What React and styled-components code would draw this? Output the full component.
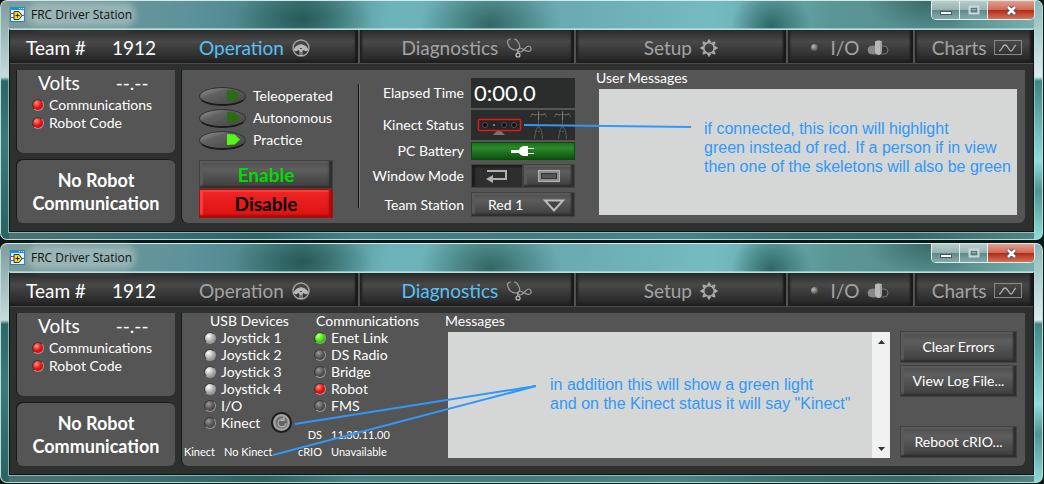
import React, { useState } from "react";
import styled, { createGlobalStyle, css } from "styled-components";

const GlobalStyle = createGlobalStyle`
  * {
    box-sizing: border-box;
  }
  body {
    margin: 0;
    background: #0c1716;
    color: #fff;
    font-family: Lato, "Open Sans", sans-serif;
    font-size: 14px;
    line-height: 18px;
  }
  button, input, select, textarea {
    font: inherit;
    color: inherit;
    margin: 0;
  }
`;

// Icons
const LabviewIcon = () => (
  <svg width="15" height="15" viewBox="0 0 15 15" aria-hidden="true">
    <rect width="15" height="15" fill="#e8f4fb" />
    <rect x="0.5" y="0.5" width="14" height="14" fill="none" stroke="#1d7fd0" />
    <rect width="15" height="3" fill="#1d8de0" />
    <path d="M9 1.5h1M11 1.5h1M13 1.5h1" stroke="#fff" />
    <path d="M1 6.500h3M1 10.500h3" stroke="#d33" />
    <path d="M11 8.500h3" stroke="#26c" />
    <path d="M4 4.500h5l3 4-3 4H4z" fill="#f5dc1c" stroke="#333" />
    <path d="M5.500 8.500h4M7.500 6.500v4" stroke="#222" />
  </svg>
);

const WheelIcon = () => (
  <svg width="18" height="18" viewBox="0 0 18 18" aria-hidden="true">
    <circle cx="9" cy="9" r="8" fill="none" stroke="#a2a2a2" strokeWidth="1.400" />
    <path
      d="M1.500 11c1-3 3-4.500 5-5 1-1 4-1 5 0 2 .5 4 2 5 5l-2.500 1.500-2.500-1.500-1 1v5H7.500v-5l-1-1L4 12.500z"
      fill="#b8b8b8"
    />
    <path d="M8 9.500h2M9 13v3" stroke="#484848" strokeWidth="1.200" />
  </svg>
);

const StethoscopeIcon = () => (
  <svg width="26" height="20" viewBox="0 0 26 20" aria-hidden="true">
    <g fill="none" stroke="#9c9c9c" strokeWidth="1.200">
      <path d="M5 1C2 1 1 3 2 6c1 3 3 6 8 6 4 0 5-4 2-8-1-2-2-3-4-3" />
      <path d="M11 12c1 1 2 2 3 2 4 0 5-6 9-6 2 0 3 4 1 5-4 2-7-3-10-3-2 0-3 2-2 6" />
      <circle cx="12" cy="17" r="2" stroke="#c4c4c4" />
    </g>
  </svg>
);

const GearIcon = () => (
  <svg width="18" height="18" viewBox="0 0 18 18" aria-hidden="true">
    <circle cx="9" cy="9" r="5.300" fill="none" stroke="#b0b0b0" strokeWidth="1.600" />
    {[0, 45, 90, 135, 180, 225, 270, 315].map((deg) => (
      <path
        key={deg}
        d="M7.300 3L9 .3 10.700 3z"
        fill="#b0b0b0"
        stroke="#b0b0b0"
        strokeWidth="0.6"
        transform={`rotate(${deg} 9 9)`}
      />
    ))}
  </svg>
);

const SwitchIcon = () => (
  <svg width="22" height="16" viewBox="0 0 22 16" aria-hidden="true">
    <rect x="1" y="6" width="20" height="8" rx="4" fill="#333" stroke="#777" />
    <path d="M5 6h6v8H5a4 4 0 010-8z" fill="#888" />
    <path d="M8 2c0-2 7-2 7 0v9c0 2-2 4-3.500 4S8 13 8 11z" fill="#b8b8b8" />
    <path d="M14 2v10" stroke="#8a8a8a" />
  </svg>
);

const ChartIcon = () => (
  <svg width="28" height="15" viewBox="0 0 28 15" aria-hidden="true">
    <rect x="0.5" y="0.5" width="27" height="14" fill="none" stroke="#888" />
    <path
      d="M5 11c3 0 3-6 6-6s4 6 6 6 2-4 5-6"
      fill="none"
      stroke="#b0b0b0"
      strokeWidth="1.300"
    />
  </svg>
);

const Skeleton = ({ x }) => (
  <g transform={`translate(${x} 0)`} fill="none" stroke="#5c5c5c">
    <path d="M9.500 1v15M3 4.500h13M1.500 7l2-4 3 3M17.500 7l-2-4-3 3M9.500 16l-3 5-1 8M9.500 16l3 5 1 8" />
    <path d="M9.500 2v8" stroke="#808080" />
    <path d="M6 21.500h7" strokeDasharray="2 1" />
  </g>
);

const KinectIcon = () => (
  <svg width="104" height="30" viewBox="0 0 104 30" aria-hidden="true">
    <path d="M22 25l6-6 6 6z" fill="#777" />
    <rect x="7" y="9" width="43" height="12" fill="#262626" />
    <rect x="7.500" y="9.500" width="42" height="11" rx="1" fill="none" stroke="#e01818" strokeWidth="1.500" />
    {[14, 33, 43].map((cx) => (
      <circle key={cx} cx={cx} cy="15" r="2.500" fill="#0b0b0b" stroke="#555" />
    ))}
    <circle cx="23" cy="15" r="1" fill="#999" />
    <Skeleton x={58} />
    <Skeleton x={82} />
  </svg>
);

const PlugIcon = () => (
  <svg width="24" height="10" viewBox="0 0 24 10" aria-hidden="true">
    <path d="M0 4h8c1-3 3-4 5-4h4v2h6v1h-6v4h6v1h-6v2h-4c-2 0-4-1-5-3H0z" fill="#fff" />
  </svg>
);

const ReturnIcon = () => (
  <svg width="22" height="14" viewBox="0 0 22 14" aria-hidden="true">
    <path d="M1 2h19v8H7" fill="none" stroke="#b0b0b0" strokeWidth="2" />
    <path d="M0 10l7-4v8z" fill="#b0b0b0" />
  </svg>
);

const RectIcon = () => (
  <svg width="22" height="12" viewBox="0 0 22 12" aria-hidden="true">
    <rect x="0.5" y="0.5" width="21" height="11" fill="#8c8c8c" stroke="#b4b4b4" />
    <rect x="3.500" y="3.500" width="15" height="5" fill="#555" stroke="#333" />
  </svg>
);

const TriangleIcon = () => (
  <svg width="22" height="13" viewBox="0 0 22 13" aria-hidden="true">
    <path d="M2 1.500h18L11 11.500z" fill="#444" stroke="#bcbcbc" strokeWidth="2" />
  </svg>
);

const RefreshIcon = () => (
  <svg width="12" height="12" viewBox="0 0 12 12" aria-hidden="true">
    <path d="M10 6a4 4 0 11-2-3.500M8 0v3.500H4.500" fill="none" stroke="#b5b5b5" strokeWidth="1.200" />
  </svg>
);

// Window frame
const Page = styled.main`
  display: flex;
  flex-direction: column;
  gap: 3px;
  padding-right: 1px;
`;

const Frame = styled.section`
  position: relative;
  padding: 0 8px 7px;
  border: 1px solid #b9dcdc;
  border-top-color: #d5e8e8;
  border-radius: 7px;
  background:
    linear-gradient(180deg, rgba(200, 220, 220, 0), #c9dada 76px, #2c6767 80px, #3c7a7a 140px, #2a6262) 0 0 / 8px 100% no-repeat,
    linear-gradient(180deg, rgba(210, 230, 230, 0.2), #dcecec 76px, #3f8585 80px, #8fdcdc 160px, #4f9494 190px, #8fdcdc) 100% 0 / 8px 100% no-repeat,
    linear-gradient(transparent 200px, rgba(20, 65, 65, 0.45) 201px),
    radial-gradient(70px 34px at 29% 18px, rgba(28, 75, 72, 0.7), transparent),
    radial-gradient(70px 50px at 47% 24px, rgba(36, 85, 80, 0.8), transparent),
    radial-gradient(40px 40px at 74% 26px, rgba(25, 80, 78, 0.75), transparent),
    radial-gradient(60px 30px at 89% 0, rgba(40, 85, 82, 0.6), transparent),
    linear-gradient(100deg, #809c9a, #5b929a 18%, #437f80 28%, #6db4ba 36%, #6aaab0 52%, #74bbc0 66%, #5b9696 77%, #548b8b 88%, #8ac0c0);
`;

const TitleBar = styled.header`
  display: flex;
  align-items: flex-start;
  justify-content: space-between;
  height: 28px;
`;

const Title = styled.h1`
  display: flex;
  align-items: center;
  gap: 6px;
  margin: 5px 0 0 1px;
  font: 400 12px/17px "Open Sans", sans-serif;
  color: #111;

  span {
    border-radius: 8px;
    background: rgba(190, 208, 208, 0.5);
    box-shadow: 0 0 6px 4px rgba(190, 208, 208, 0.5);
  }
`;

const Captions = styled.div`
  display: flex;
  margin-right: -1px;
  border: 1px solid #dfeeee;
  border-top: 0;
  border-radius: 0 0 5px 5px;
  overflow: hidden;
`;

const CaptionButton = styled.button`
  display: grid;
  place-items: center;
  width: ${({ $close }) => ($close ? 46 : 28)}px;
  height: 18px;
  padding: 0;
  border: 0;
  border-right: ${({ $close }) => ($close ? "0" : "1px solid #dfeeee")};
  background: ${({ $close }) =>
    $close
      ? "linear-gradient(#e0a093, #cf6a58 48%, #b02a14 50%, #d2725c)"
      : "linear-gradient(#b9cccc, #95b2b2 48%, #5f8787 50%, #86aaaa)"};
`;

const Client = styled.div`
  border: 1px solid #0d1414;
  border-top-color: #b9dfdf;
  outline: 1px solid rgba(190, 230, 230, 0.6);
  background: #2e3030;
`;

const TabBar = styled.nav`
  display: grid;
  grid-template-columns: 173px 176fr 217fr 212fr 128fr 119fr;
  height: 34px;
  margin-bottom: 6px;
  background: linear-gradient(#2b2b2b, #484848 35%, #2b2b2b 85%, #1c1c1c);
  border-bottom: 1px solid #4c4c4c;
`;

const Team = styled.div`
  display: flex;
  align-items: center;
  gap: 26px;
  padding: 2px 0 0 16px;
  font-size: 19px;
`;

const Tab = styled.button`
  display: flex;
  align-items: center;
  justify-content: center;
  gap: 8px;
  padding: 2px 0 0;
  border: 0;
  border-right: 1px solid #555;
  border-left: 1px solid #505050;
  background: none;
  box-shadow: inset -4px 0 2px -1px #191919, inset 3px 0 2px -1px #202020;
  color: ${({ $active }) => ($active ? "#56c1f7" : "#a3a3a3")};
  font-size: 19px;

  &:first-of-type {
    justify-content: flex-start;
    padding-left: 16px;
    border-left: 0;
    box-shadow: inset -4px 0 2px -1px #191919;
  }
  &:last-of-type {
    padding-left: 6px;
    border-right: 0;
  }
`;

const Dot = styled.span`
  width: 7px;
  height: 7px;
  margin-right: 4px;
  border-radius: 50%;
  background: radial-gradient(circle at 35% 35%, #bbb, #555 70%);
`;

// Panels
const Body = styled.div`
  display: flex;
  gap: 7px;
  padding: 0 8px 8px 7px;
`;

const Side = styled.aside`
  display: flex;
  flex-direction: column;
  gap: 7px;
  width: 158px;
`;

const Panel = styled.div`
  border-radius: 0 0 6px 6px;
  background: #555;
  box-shadow: -1px 0 0 #191919;
`;

const StatusPanel = styled(Panel)`
  height: 83px;
  padding: 2px 15px;
`;

const Volts = styled.div`
  display: flex;
  gap: 36px;
  padding: 0 0 3px 6px;
  font-size: 19px;
  line-height: 21px;
`;

const NoticePanel = styled(Panel)`
  display: grid;
  place-items: center;
  height: 63px;
  border-radius: 6px;
  box-shadow: -1px -1px 0 #191919;
  font-size: 18px;
  font-weight: 700;
  line-height: 23px;
  text-align: center;
`;

const MainPanel = styled(Panel)`
  display: flex;
  flex: 1;
  height: 153px;
  padding: 0 8px 8px 0;
`;

const LedRow = styled.div`
  display: flex;
  align-items: center;
  gap: 5px;
  height: ${({ $tall }) => ($tall ? 18 : 17)}px;
`;

const ledColors = {
  red: "#ff9a8a, #f21313 45%, #a00",
  green: "#c4ff9a, #45f00b 45%, #1b8a00",
  grey: "#fff, #b5b5b5 50%, #777",
  off: "#999, #555 50%, #333",
};

const Led = styled.span`
  width: 12px;
  height: 12px;
  border: 1px solid #3a3a3a;
  border-right-color: #999;
  border-bottom-color: #999;
  border-radius: 50%;
  background: radial-gradient(circle at 35% 30%, ${({ $color }) => ledColors[$color]});
`;

const bevel = css`
  border: 1px solid;
  border-color: #6c6c6c #2a2a2a #2a2a2a #6c6c6c;
  outline: 1px solid #424242;
  outline-offset: -1px;
  background: linear-gradient(#4b4b4b, #5e5e5e 30%, #3d3d3d);
  box-shadow: inset -3px -2px 2px #2e2e2e, inset 3px 2px 1px #5a5a5a;
`;

// Operation
const Modes = styled.div`
  display: flex;
  flex-direction: column;
  width: 177px;
  margin: 14px 0 7px;
  padding: 1px 0 0 17px;
  border-right: 1px solid #111;
  box-shadow: 1px 0 0 #777;
`;

const ModeLabel = styled.label`
  display: flex;
  flex-shrink: 0;
  align-items: center;
  gap: 7px;
  height: 22px;
`;

const ModeRadio = styled.input`
  appearance: none;
  display: grid;
  align-items: center;
  justify-items: end;
  width: 47px;
  height: 19px;
  padding-right: 5px;
  border: 1px solid #333;
  border-bottom: 2px solid #1b1b1b;
  border-radius: 50%;
  background: linear-gradient(160deg, #999, #616161 35%, #444);

  &::after {
    content: "";
    width: 13px;
    height: 11px;
    clip-path: polygon(0 0, 60% 5%, 100% 50%, 60% 95%, 0 100%);
    background: #2c6b14;
  }
  &:checked::after {
    background: #55f51c;
  }
`;

const Buttons = styled.div`
  display: flex;
  flex-direction: column;
  margin-top: 9px;
`;

const PowerButton = styled.button`
  ${bevel}
  width: 134px;
  height: 29px;
  padding: 0;
  color: #0d0;
  font-size: 19px;
  font-weight: 700;

  ${({ $stop }) =>
    $stop &&
    css`
      border-color: #ff5c5c #7e0000 #7e0000 #ff5c5c;
      outline-color: #a51212;
      background: linear-gradient(#f02626, #dc1212);
      box-shadow: inset -3px -2px 2px #a80a0a, inset 3px 2px 1px #ff3a3a;
      color: #000;
    `}
`;

const Fields = styled.div`
  display: grid;
  grid-template-columns: 105px 104px;
  grid-template-rows: 30px 30px 18px 28px 25px;
  column-gap: 7px;
  row-gap: 2px;
  align-items: center;
  padding-top: 8px;
`;

const FieldName = styled.label`
  text-align: right;
`;

const Clock = styled.output`
  height: 30px;
  padding-left: 3px;
  background: #2b2d2d;
  font-size: 22px;
  line-height: 30px;
`;

const KinectBox = styled.div`
  height: 30px;
  background: #2b2d2d;
`;

const Battery = styled.div`
  display: grid;
  place-items: center;
  height: 18px;
  border: 1px solid #0a4a0a;
  background: linear-gradient(#1c6f1c, #2c8a2c 30%, #0d500d);
`;

const WindowModes = styled.div`
  display: flex;
`;

const ModeButton = styled.button`
  ${bevel}
  display: grid;
  place-items: center;
  flex: 1;
  height: 24px;
  padding: 0;
  ${({ $pressed }) =>
    $pressed &&
    css`
      background: #2e2e2e;
      box-shadow: inset 3px 2px 2px #1c1c1c;
    `}
`;

const SelectWrap = styled.div`
  position: relative;

  svg {
    position: absolute;
    right: 10px;
    top: 7px;
    pointer-events: none;
  }
`;

const StationSelect = styled.select`
  ${bevel}
  appearance: none;
  display: block;
  width: 100%;
  height: 25px;
  padding: 0 0 0 16px;

  option {
    background: #444;
  }
`;

const Messages = styled.div`
  display: flex;
  flex: 1;
  flex-direction: column;
  padding-left: ${({ $indent }) => $indent}px;
`;

const MessagesLabel = styled.label`
  height: 19px;
  margin-left: -3px;
  line-height: 16px;
`;

const MessageBox = styled.div`
  display: flex;
  flex: 1;
  background: #d5d7d6;
`;

const MessageText = styled.textarea`
  flex: 1;
  width: 100%;
  border: 0;
  background: none;
  resize: none;
  color: #222;
`;

const ScrollTrack = styled.div`
  display: flex;
  flex-direction: column;
  justify-content: space-between;
  width: 18px;
  background: #f1f1f1;
`;

const ScrollButton = styled.button`
  display: grid;
  place-items: center;
  height: 19px;
  padding: 0;
  border: 0;
  background: none;
`;

// Diagnostics
const Devices = styled.div`
  display: grid;
  grid-template-columns: 110px 1fr;
  grid-template-rows: 118px 29px;
  width: 251px;
`;

const DeviceList = styled.div`
  padding-left: 22px;
`;

const DeviceTitle = styled.h2`
  margin: 0 0 0 ${({ $shift }) => $shift}px;
  font-size: 14px;
  font-weight: 400;
  line-height: 16px;
`;

const RefreshButton = styled.button`
  display: grid;
  place-items: center;
  width: 21px;
  height: 21px;
  margin-left: 6px;
  padding: 0;
  border: 2px solid #1d1d1d;
  border-radius: 50%;
  background: radial-gradient(#666 40%, #aaa 60%, #555);
`;

const Versions = styled.dl`
  display: grid;
  grid-template-columns: ${({ $name }) => $name}px auto;
  column-gap: 9px;
  align-content: end;
  justify-content: start;
  margin: 0;
  font-size: 11px;
  line-height: 17px;
  white-space: nowrap;

  dt {
    text-align: right;
  }
  dd {
    margin: 0;
  }
`;

const Actions = styled.div`
  display: flex;
  flex-direction: column;
  gap: 2px;
  width: 117px;
  margin-left: 10px;
  padding-top: 18px;
`;

const ActionButton = styled.button`
  ${bevel}
  height: 32px;
  padding: 0;

  &:last-child {
    margin-top: auto;
  }
`;

// Notes drawn over the windows
const Note = styled.p`
  position: absolute;
  left: ${({ $left }) => $left}px;
  top: ${({ $top }) => $top}px;
  margin: 0;
  color: #3097fb;
  font: 16px/19px "Liberation Sans", Arial, sans-serif;
  white-space: nowrap;
  pointer-events: none;
`;

const Pointer = styled.svg`
  position: absolute;
  left: 0;
  top: 0;
  overflow: visible;
  pointer-events: none;
  stroke: #3097fb;
  stroke-width: 2;
`;

const TABS = [
  { name: "Operation", icon: <WheelIcon /> },
  { name: "Diagnostics", icon: <StethoscopeIcon /> },
  { name: "Setup", icon: <GearIcon /> },
  { name: "I/O", icon: <SwitchIcon />, dot: true },
  { name: "Charts", icon: <ChartIcon /> },
];

const StatusLed = ({ color, tall, children }) => (
  <LedRow $tall={tall}>
    <Led $color={color} />
    {children}
  </LedRow>
);

const StationWindow = ({ active, children, notes }) => (
  <Frame>
    <TitleBar>
      <Title>
        <LabviewIcon />
        <span>FRC Driver Station</span>
      </Title>
      <Captions>
        <CaptionButton aria-label="Minimize">
          <svg width="12" height="12" viewBox="0 0 12 12">
            <rect x="0.5" y="7.500" width="11" height="3" fill="#fff" stroke="#46595f" />
          </svg>
        </CaptionButton>
        <CaptionButton aria-label="Maximize">
          <svg width="12" height="10" viewBox="0 0 12 10">
            <rect x="1.500" y="1.500" width="9" height="7" fill="none" stroke="#c8d8d8" strokeWidth="2" />
            <rect x="3.500" y="3.500" width="5" height="3" fill="none" stroke="#5f7b7b" />
          </svg>
        </CaptionButton>
        <CaptionButton $close aria-label="Close">
          <svg width="13" height="11" viewBox="0 0 13 11">
            <path d="M3 2l7 7M10 2l-7 7" stroke="#4c4f5c" strokeWidth="4.500" />
            <path d="M3 2l7 7M10 2l-7 7" stroke="#fff" strokeWidth="2.500" />
          </svg>
        </CaptionButton>
      </Captions>
    </TitleBar>
    <Client>
      <TabBar>
        <Team>
          <span>Team #</span>
          <span>1912</span>
        </Team>
        {TABS.map(({ name, icon, dot }) => (
          <Tab key={name} $active={name === active}>
            {dot && <Dot />}
            {name}
            {icon}
          </Tab>
        ))}
      </TabBar>
      <Body>
        <Side>
          <StatusPanel>
            <Volts>
              <span>Volts</span>
              <span>--.--</span>
            </Volts>
            <StatusLed color="red" tall>Communications</StatusLed>
            <StatusLed color="red" tall>Robot Code</StatusLed>
          </StatusPanel>
          <NoticePanel>
            <div>
              No Robot
              <br />
              Communication
            </div>
          </NoticePanel>
        </Side>
        <MainPanel>{children}</MainPanel>
      </Body>
    </Client>
    {notes}
  </Frame>
);

const Operation = () => {
  const [mode, setMode] = useState("Practice");
  return (
    <>
      <Modes>
        {["Teleoperated", "Autonomous", "Practice"].map((name) => (
          <ModeLabel key={name}>
            <ModeRadio
              type="radio"
              name="mode"
              checked={mode === name}
              onChange={() => setMode(name)}
            />
            {name}
          </ModeLabel>
        ))}
        <Buttons>
          <PowerButton>Enable</PowerButton>
          <PowerButton $stop>Disable</PowerButton>
        </Buttons>
      </Modes>
      <Fields>
        <FieldName htmlFor="elapsed">Elapsed Time</FieldName>
        <Clock id="elapsed">0:00.0</Clock>
        <FieldName as="span">Kinect Status</FieldName>
        <KinectBox>
          <KinectIcon />
        </KinectBox>
        <FieldName as="span">PC Battery</FieldName>
        <Battery>
          <PlugIcon />
        </Battery>
        <FieldName as="span">Window Mode</FieldName>
        <WindowModes>
          <ModeButton $pressed aria-label="Docked">
            <ReturnIcon />
          </ModeButton>
          <ModeButton aria-label="Floating">
            <RectIcon />
          </ModeButton>
        </WindowModes>
        <FieldName htmlFor="station">Team Station</FieldName>
        <SelectWrap>
          <StationSelect id="station">
            <option>Red 1</option>
          </StationSelect>
          <TriangleIcon />
        </SelectWrap>
      </Fields>
      <Messages $indent={24}>
        <MessagesLabel htmlFor="user-messages">User Messages</MessagesLabel>
        <MessageBox>
          <MessageText id="user-messages" readOnly />
        </MessageBox>
      </Messages>
    </>
  );
};

const Diagnostics = () => (
  <>
    <Devices>
      <DeviceList>
        <DeviceTitle $shift={6}>USB Devices</DeviceTitle>
        <StatusLed color="grey">Joystick 1</StatusLed>
        <StatusLed color="grey">Joystick 2</StatusLed>
        <StatusLed color="grey">Joystick 3</StatusLed>
        <StatusLed color="grey">Joystick 4</StatusLed>
        <StatusLed color="off">I/O</StatusLed>
        <StatusLed color="off">
          Kinect
          <RefreshButton aria-label="Refresh">
            <RefreshIcon />
          </RefreshButton>
        </StatusLed>
      </DeviceList>
      <DeviceList>
        <DeviceTitle $shift={2}>Communications</DeviceTitle>
        <StatusLed color="green">Enet Link</StatusLed>
        <StatusLed color="off">DS Radio</StatusLed>
        <StatusLed color="off">Bridge</StatusLed>
        <StatusLed color="red">Robot</StatusLed>
        <StatusLed color="off">FMS</StatusLed>
      </DeviceList>
      <Versions $name={33}>
        <dt>Kinect</dt>
        <dd>No Kinect</dd>
      </Versions>
      <Versions $name={30}>
        <dt>DS</dt>
        <dd>11.30.11.00</dd>
        <dt>cRIO</dt>
        <dd>Unavailable</dd>
      </Versions>
    </Devices>
    <Messages $indent={15}>
      <MessagesLabel htmlFor="messages">Messages</MessagesLabel>
      <MessageBox>
        <MessageText id="messages" readOnly />
        <ScrollTrack>
          <ScrollButton aria-label="Scroll up">
            <svg width="7" height="4" viewBox="0 0 7 4">
              <path d="M0 4l3.500-4L7 4z" fill="#333" />
            </svg>
          </ScrollButton>
          <ScrollButton aria-label="Scroll down">
            <svg width="7" height="4" viewBox="0 0 7 4">
              <path d="M0 0l3.500 4L7 0z" fill="#333" />
            </svg>
          </ScrollButton>
        </ScrollTrack>
      </MessageBox>
    </Messages>
    <Actions>
      <ActionButton>Clear Errors</ActionButton>
      <ActionButton>View Log File...</ActionButton>
      <ActionButton>Reboot cRIO...</ActionButton>
    </Actions>
  </>
);

const App = () => (
  <>
    <GlobalStyle />
    <Page>
      <StationWindow
        active="Operation"
        notes={
          <>
            <Pointer width="1" height="1" aria-hidden="true">
              <path d="M523 124L690 126" />
            </Pointer>
            <Note $left={703} $top={118}>
              if connected, this icon will highlight
              <br />
              green instead of red. If a person if in view
              <br />
              then one of the skeletons will also be green
            </Note>
          </>
        }
      >
        <Operation />
      </StationWindow>
      <StationWindow
        active="Diagnostics"
        notes={
          <>
            <Pointer width="1" height="1" aria-hidden="true">
              <path d="M294 180L535 142M272 211L535 142" />
            </Pointer>
            <Note $left={549} $top={131}>
              in addition this will show a green light
              <br />
              and on the Kinect status it will say "Kinect"
            </Note>
          </>
        }
      >
        <Diagnostics />
      </StationWindow>
    </Page>
  </>
);

export default App;
